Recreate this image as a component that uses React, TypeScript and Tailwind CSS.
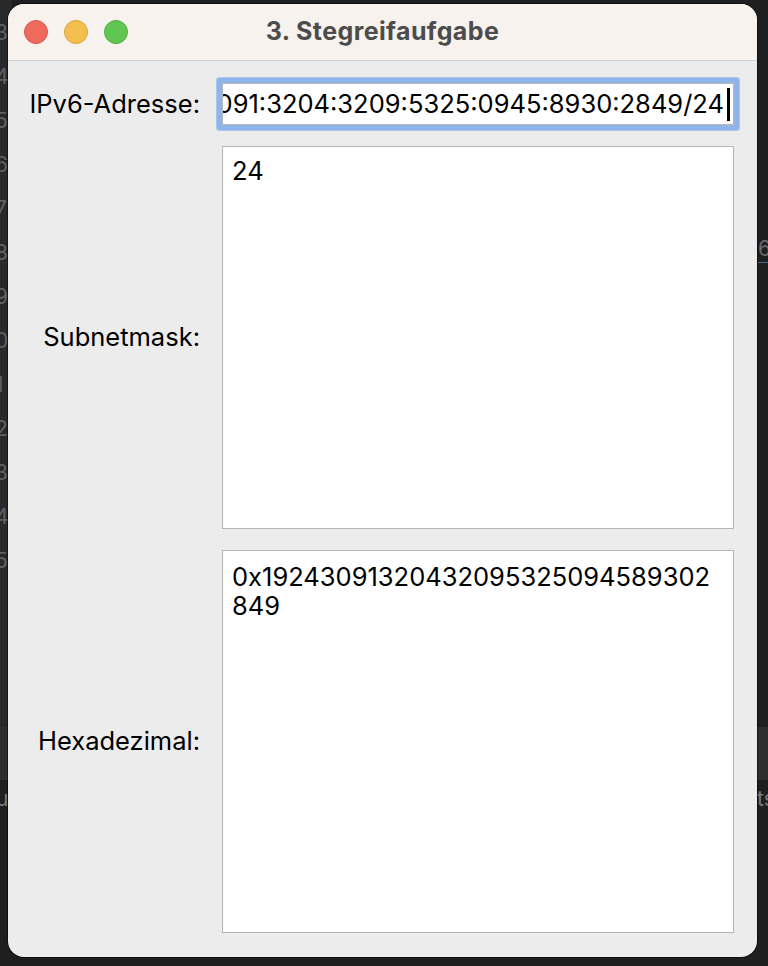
import React from 'react'

const GUTTER = ['3', '4', '5', '6', '7', '8', '9', '0', '1', '2', '3', '4', '5']

// only the visible tail of the address; the field is scrolled to the end
const ADDRESS_TAIL = '091:3204:3209:5325:0945:8930:2849/24'

function Field({ label, children }: { label: string; children: React.ReactNode }) {
  return (
    <div className="flex items-center">
      <div className="w-[192px] shrink-0 whitespace-nowrap text-right text-[25.5px] text-black">{label}</div>
      <div className="ml-[22px] min-w-0 flex-1">{children}</div>
    </div>
  )
}

export default function App() {
  return (
    <div
      className="relative h-[966px] w-[768px] overflow-hidden bg-[#1f1f1f]"
      style={{ fontFamily: 'Inter, "Noto Sans", sans-serif' }}
    >
      {/* editor behind the window */}
      <div className="absolute left-0 top-0 h-[727px] w-[12px] bg-[#28292b]" />
      <div className="absolute left-0 top-[727px] h-[53px] w-full bg-[#2c2e30]" />
      <div className="absolute left-[-5px] top-[11px] flex flex-col text-[21px] leading-[44px] text-[#5f6063]">
        {GUTTER.map((n, i) => (
          <span key={i}>{n}</span>
        ))}
      </div>
      <div className="absolute left-[758px] top-[236px] border-b border-[#4b6a8a] text-[21px] leading-[26px] text-[#6a6b6e]">6</div>
      <div className="absolute left-[-4px] top-[786px] text-[21px] leading-[26px] text-[#7a7b7e]">u</div>
      <div className="absolute left-[757px] top-[786px] text-[21px] leading-[26px] text-[#7a7b7e]">ts</div>

      {/* window */}
      <div className="absolute left-[8px] top-[4px] flex h-[953px] w-[749px] flex-col overflow-hidden rounded-[16px] bg-[#ececec] shadow-[0_0_0_1px_rgba(0,0,0,0.5)]">
        {/* title bar */}
        <div className="relative flex h-[57px] shrink-0 items-center justify-center border-b border-[#d6d2ce] bg-[#f7f2ee]">
          <div className="absolute left-[16px] top-[16px] flex gap-[16px]">
            <span className="h-[24px] w-[24px] rounded-full border border-[#d9574d] bg-[#ee6a5f]" />
            <span className="h-[24px] w-[24px] rounded-full border border-[#dba43a] bg-[#f5bf4f]" />
            <span className="h-[24px] w-[24px] rounded-full border border-[#4fad3f] bg-[#61c554]" />
          </div>
          <span className="text-[25px] font-bold tracking-[0.4px] text-[#4c4c4c]">3. Stegreifaufgabe</span>
        </div>

        {/* form */}
        <div className="flex flex-col gap-[21px] pr-[23px] pt-[22px]">
          <Field label="IPv6-Adresse:">
            <div className="flex h-[42px] items-center justify-end overflow-hidden rounded-[1px] border border-[#b8b8b8] bg-white pr-[3px] shadow-[0_0_0_5px_#8fb5ec,0_0_0_6px_#a9c6ef]">
              <span className="min-w-0 overflow-hidden whitespace-nowrap text-[25.5px] leading-[30px] text-black [direction:rtl]">
                <span className="[direction:ltr] [unicode-bidi:isolate]">{ADDRESS_TAIL}</span>
              </span>
              <span className="ml-[3px] h-[33px] w-[3px] shrink-0 bg-black" />
            </div>
          </Field>

          <Field label="Subnetmask:">
            <div className="h-[383px] border border-[#b5b5b5] bg-white pl-[9px] pt-[10px] text-[25.5px] leading-[28px] text-black">
              24
            </div>
          </Field>

          <Field label="Hexadezimal:">
            <div className="h-[383px] border border-[#b5b5b5] bg-white pl-[9px] pt-[11px] text-[25.5px] leading-[29px] text-black">
              <div>0x19243091320432095325094589302</div>
              <div>849</div>
            </div>
          </Field>
        </div>
      </div>
    </div>
  )
}
